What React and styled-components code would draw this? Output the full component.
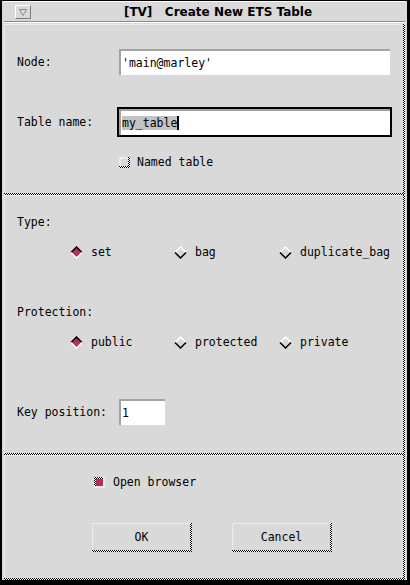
import React from 'react'
import styled, { createGlobalStyle } from 'styled-components'

const GRAY = '#d9d9d9'
const MAROON = '#b03060'
const darkDots = `repeating-conic-gradient(#000 0% 25%, #fff 0% 50%) 0 0 / 2px 2px`
const lightDots = `repeating-conic-gradient(#fff 0% 25%, ${GRAY} 0% 50%) 0 0 / 2px 2px`

const GlobalStyle = createGlobalStyle`
  html, body { margin: 0; padding: 0; background: ${GRAY}; }
  body {
    font-family: "DejaVu Sans Mono", "Liberation Mono", monospace;
    font-size: 11.5px;
    color: #000;
  }
`

const Window = styled.div`
  box-sizing: border-box;
  width: 410px;
  height: 585px;
  display: flex;
  flex-direction: column;
  background: ${GRAY};
  border-style: solid;
  border-color: #000;
  border-width: 1px 3px 5px 2px;
  padding: 0 2px;
`

const TitleBar = styled.div`
  box-sizing: border-box;
  height: 22px;
  margin-bottom: 1px;
  display: flex;
  align-items: center;
  padding-left: 11px;
  border-top: 1px solid #fff;
  border-bottom: 1px solid #fff;
  box-shadow: inset 0 -1px 0 #8a8a8a;
`

const MenuButton = styled.div`
  box-sizing: border-box;
  width: 16px;
  height: 14px;
  display: flex;
  align-items: center;
  justify-content: center;
  border-top: 1px solid #fff;
  border-left: 1px solid #fff;
  border-bottom: 1px solid #7a7a7a;
  border-right: 1px solid #7a7a7a;
`

const Title = styled.div`
  flex: 1;
  text-align: center;
  white-space: pre;
  font-family: "DejaVu Sans", "Liberation Sans", sans-serif;
  font-weight: bold;
  font-size: 12px;
`

/* raised etched frame: light stipple top/left, dark stipple bottom/right */
const Section = styled.div`
  box-sizing: border-box;
  height: ${p => p.$h}px;
  display: flex;
  padding: 0 2px 2px 0;
  background: ${darkDots};
`

const Face = styled.div`
  flex: 1;
  display: flex;
  flex-direction: column;
  padding-left: 12px;
  border-top: 1px solid transparent;
  border-left: 1px solid transparent;
  background: linear-gradient(${GRAY}, ${GRAY}) padding-box, ${lightDots} border-box;
`

const Row = styled.div`
  display: flex;
  align-items: center;
  height: ${p => p.$h || 14}px;
  margin-top: ${p => p.$mt}px;
  padding-left: ${p => p.$indent || 0}px;
  gap: ${p => p.$gap || 0}px;
`

const Label = styled.span`
  width: ${p => p.$w || 100}px;
  line-height: 14px;
  white-space: pre;
`

const Entry = styled.div`
  box-sizing: border-box;
  width: ${p => p.$w}px;
  height: 30px;
  display: flex;
  border: 2px solid ${p => (p.$focus ? '#000' : 'transparent')};
`

const EntryField = styled.div`
  flex: 1;
  display: flex;
  align-items: center;
  padding-left: 1px;
  background: #fff;
  border-top: 2px solid #a3a3a3;
  border-left: 2px solid #a3a3a3;
  white-space: pre;
`

const Selected = styled.span`
  background: #c3c3c3;
  line-height: 14px;
`

const Cursor = styled.span`
  width: 2px;
  height: 14px;
  background: #000;
`

const CheckOuter = styled.span`
  box-sizing: border-box;
  display: flex;
  width: 11px;
  height: 11px;
  padding: 0 2px 2px 0;
  background: ${p => (p.$on ? lightDots : darkDots)};
`

const CheckFace = styled.span`
  flex: 1;
  border-top: 2px solid transparent;
  border-left: 2px solid transparent;
  background: linear-gradient(${p => (p.$on ? MAROON : GRAY)}, ${p => (p.$on ? MAROON : GRAY)}) padding-box,
    ${p => (p.$on ? darkDots : lightDots)} border-box;
`

const RadioGroup = styled.div`
  display: grid;
  grid-template-columns: 104px 105px auto;
  align-items: center;
  height: 14px;
  margin-top: 16px;
  padding-left: 53px;
`

const RadioItem = styled.div`
  display: flex;
  align-items: center;
  gap: 8px;
  line-height: 14px;
`

const ButtonOuter = styled.div`
  box-sizing: border-box;
  display: flex;
  width: 100px;
  height: 29px;
  padding: 0 2px 2px 0;
  background: ${darkDots};
`

const ButtonFace = styled.div`
  flex: 1;
  display: flex;
  align-items: center;
  justify-content: center;
  border-top: 1px solid transparent;
  border-left: 1px solid transparent;
  background: linear-gradient(${GRAY}, ${GRAY}) padding-box, ${lightDots} border-box;
`

const Diamond = ({ on }) => (
  <svg width="13" height="13" viewBox="0 0 13 13">
    <polygon points="6.5,1 12,6.5 6.5,12 1,6.5" fill={on ? MAROON : GRAY} />
    <polyline points="1,6.5 6.5,1 12,6.5" fill="none" stroke={on ? '#000' : '#fff'} strokeWidth="1.5" />
    <polyline points="1,6.5 6.5,12 12,6.5" fill="none" stroke={on ? '#fff' : '#000'} strokeWidth="1.5" />
  </svg>
)

const Radio = ({ on, children }) => (
  <RadioItem>
    <Diamond on={on} />
    <span>{children}</span>
  </RadioItem>
)

const Check = ({ on }) => (
  <CheckOuter $on={on}>
    <CheckFace $on={on} />
  </CheckOuter>
)

const Button = ({ children }) => (
  <ButtonOuter>
    <ButtonFace>{children}</ButtonFace>
  </ButtonOuter>
)

export default function App() {
  return (
    <>
      <GlobalStyle />
      <Window>
        <TitleBar>
          <MenuButton>
            <svg width="8" height="7" viewBox="0 0 8 7">
              <polygon points="0.5,0.5 7.5,0.5 4,6.5" fill="none" stroke="#8a8a8a" strokeWidth="1" />
            </svg>
          </MenuButton>
          <Title>{'[TV]   Create New ETS Table'}</Title>
        </TitleBar>

        <Section $h={171}>
          <Face>
            <Row $h={30} $mt={22}>
              <Label>Node:</Label>
              <Entry $w={275}>
                <EntryField>'main@marley'</EntryField>
              </Entry>
            </Row>
            <Row $h={30} $mt={30}>
              <Label>Table name:</Label>
              <Entry $w={275} $focus>
                <EntryField>
                  <Selected>my_table</Selected>
                  <Cursor />
                </EntryField>
              </Entry>
            </Row>
            <Row $mt={18} $indent={102} $gap={7}>
              <Check />
              <Label $w={120}>Named table</Label>
            </Row>
          </Face>
        </Section>

        <Section $h={260}>
          <Face>
            <Row $mt={19}>
              <Label>Type:</Label>
            </Row>
            <RadioGroup>
              <Radio on>set</Radio>
              <Radio>bag</Radio>
              <Radio>duplicate_bag</Radio>
            </RadioGroup>
            <Row $mt={46}>
              <Label>Protection:</Label>
            </Row>
            <RadioGroup>
              <Radio on>public</Radio>
              <Radio>protected</Radio>
              <Radio>private</Radio>
            </RadioGroup>
            <Row $h={30} $mt={48}>
              <Label>Key position:</Label>
              <Entry $w={50}>
                <EntryField>1</EntryField>
              </Entry>
            </Row>
          </Face>
        </Section>

        <Section $h={125}>
          <Face>
            <Row $mt={19} $indent={77} $gap={8}>
              <Check on />
              <Label $w={120}>Open browser</Label>
            </Row>
            <Row $h={29} $mt={34} $indent={75} $gap={40}>
              <Button>OK</Button>
              <Button>Cancel</Button>
            </Row>
          </Face>
        </Section>
      </Window>
    </>
  )
}
